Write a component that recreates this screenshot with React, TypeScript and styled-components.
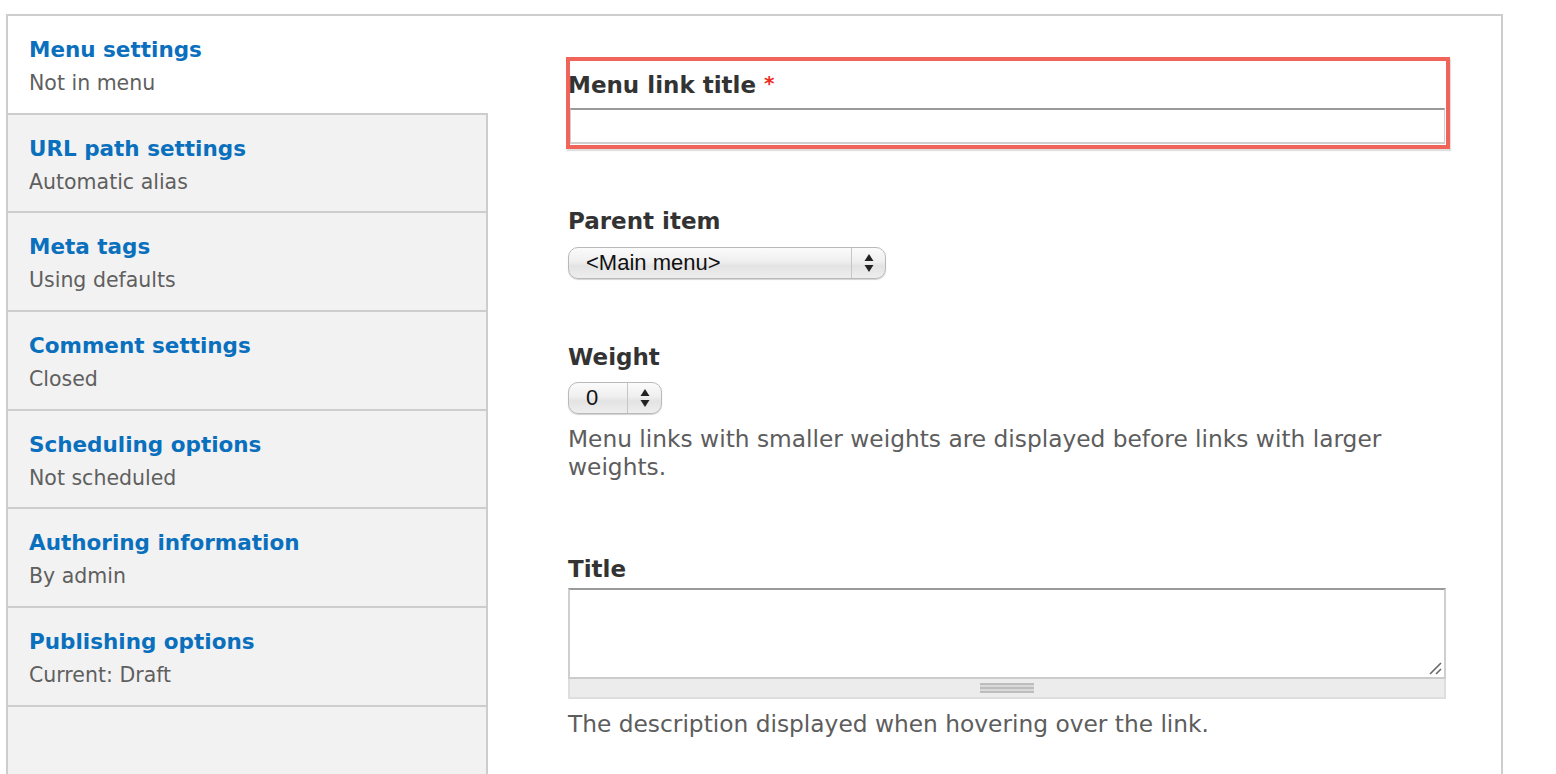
import React from 'react'
import styled, { createGlobalStyle } from 'styled-components'

const GlobalStyle = createGlobalStyle`
  body {
    margin: 0;
    background: #fff;
    overflow: hidden;
    font-family: "DejaVu Sans", Verdana, sans-serif;
  }
`

const Page = styled.div`
  padding: 14px 0 0 6px;
`

const Frame = styled.div`
  box-sizing: border-box;
  width: 1497px;
  min-height: 820px;
  border: 2px solid #cdcdcd;
  border-bottom: none;
  display: flex;
`

const Sidebar = styled.div`
  box-sizing: border-box;
  width: 480px;
  flex-shrink: 0;
  background: #f2f2f2;
  border-right: 2px solid #cdcdcd;
`

const Tab = styled.div<{ $active?: boolean }>`
  height: 98.7px;
  box-sizing: border-box;
  padding: 18px 21px 0;
  border-bottom: 2px solid #cdcdcd;
  background: ${(p) => (p.$active ? '#fff' : 'transparent')};
  margin-right: ${(p) => (p.$active ? '-2px' : '0')};
`

const TabTitle = styled.div`
  font-size: 21.5px;
  line-height: 31px;
  font-weight: bold;
  color: #0a70bd;
`

const TabSummary = styled.div`
  margin-top: 3px;
  font-size: 20.5px;
  line-height: 31px;
  color: #5f5f5f;
`

const FormColumn = styled.div`
  flex: 1;
  padding: 45px 55px 0 80px;
`

const FormItem = styled.div<{ $mt?: number }>`
  margin-top: ${(p) => p.$mt ?? 0}px;
`

const HighlightedItem = styled.div`
  margin-left: 2px;
  padding: 8px 0 1px;
  box-shadow: 0 0 0 4px #f1645a, 1px 2px 1px 4px rgba(0, 0, 0, 0.12);
`

const Label = styled.div<{ $shift?: number }>`
  margin-left: ${(p) => p.$shift ?? 0}px;
  font-size: 23px;
  line-height: 28px;
  font-weight: bold;
  color: #333;
`

const Required = styled.span`
  color: #ef2b1f;
  font-size: 20px;
  vertical-align: 3px;
`

const TextInput = styled.div`
  box-sizing: border-box;
  height: 36px;
  margin-top: 9px;
  margin-right: 1px;
  background: #fff;
  border: 1px solid #cfcfcf;
  border-top: 2px solid #9a9a9a;
  border-bottom: 2px solid #cfcfcf;
`

const Select = styled.div<{ $width: number; $mt: number }>`
  box-sizing: border-box;
  width: ${(p) => p.$width}px;
  height: 32px;
  margin-top: ${(p) => p.$mt}px;
  display: flex;
  border: 1px solid #b9b9b9;
  border-radius: 10px;
  background: linear-gradient(to bottom, #fbfbfb 0%, #efefef 45%, #e3e3e3 60%, #eeeeee 100%);
  box-shadow: 0 1px 1px rgba(0, 0, 0, 0.18);
  font-family: "Liberation Sans", Arial, sans-serif;
  font-size: 22px;
  color: #111;
`

const SelectValue = styled.div`
  flex: 1;
  padding-left: 17px;
  line-height: 30px;
`

const SelectArrows = styled.div`
  width: 33px;
  border-left: 1px solid #c6c6c6;
  display: flex;
  align-items: center;
  justify-content: center;
`

const Description = styled.div<{ $mt: number }>`
  margin-top: ${(p) => p.$mt}px;
  font-size: 23.3px;
  line-height: 28px;
  color: #5d5d5d;
`

const TextareaBox = styled.div`
  box-sizing: border-box;
  position: relative;
  height: 91px;
  margin-top: 5px;
  background: #fff;
  border: 2px solid #cfcfcf;
  border-top: 2px solid #9a9a9a;
  border-bottom: 2px solid #cbcbcb;
`

const ResizeHandle = styled.svg`
  position: absolute;
  right: 1px;
  bottom: 1px;
`

const Grippie = styled.div`
  box-sizing: border-box;
  height: 20px;
  background: #ececec;
  border: 2px solid #dedede;
  border-top: none;
  display: flex;
  align-items: center;
  justify-content: center;
`

const Grip = styled.div`
  width: 54px;
  height: 10px;
  background: repeating-linear-gradient(to bottom, #bdbdbd 0 2px, #d9d9d9 2px 4px);
`

const SelectArrowIcon = () => (
  <svg width="10" height="22" viewBox="0 0 10 22">
    <path d="M5 2 L9.5 9 L0.5 9 Z" fill="#222" />
    <path d="M5 20 L9.5 13 L0.5 13 Z" fill="#222" />
  </svg>
)

const tabs = [
  { title: 'Menu settings', summary: 'Not in menu' },
  { title: 'URL path settings', summary: 'Automatic alias' },
  { title: 'Meta tags', summary: 'Using defaults' },
  { title: 'Comment settings', summary: 'Closed' },
  { title: 'Scheduling options', summary: 'Not scheduled' },
  { title: 'Authoring information', summary: 'By admin' },
  { title: 'Publishing options', summary: 'Current: Draft' },
]

const App = () => {
  return (
    <Page>
      <GlobalStyle />
      <Frame>
        <Sidebar>
          {tabs.map((t, i) => (
            <Tab key={t.title} $active={i === 0}>
              <TabTitle>{t.title}</TabTitle>
              <TabSummary>{t.summary}</TabSummary>
            </Tab>
          ))}
        </Sidebar>
        <FormColumn>
          <HighlightedItem>
            <Label $shift={-2}>
              Menu link title <Required>*</Required>
            </Label>
            <TextInput />
          </HighlightedItem>

          <FormItem $mt={62}>
            <Label>Parent item</Label>
            <Select $width={318} $mt={12}>
              <SelectValue>&lt;Main menu&gt;</SelectValue>
              <SelectArrows>
                <SelectArrowIcon />
              </SelectArrows>
            </Select>
          </FormItem>

          <FormItem $mt={64}>
            <Label>Weight</Label>
            <Select $width={94} $mt={11}>
              <SelectValue>0</SelectValue>
              <SelectArrows>
                <SelectArrowIcon />
              </SelectArrows>
            </Select>
            <Description $mt={11}>
              Menu links with smaller weights are displayed before links with larger weights.
            </Description>
          </FormItem>

          <FormItem $mt={74}>
            <Label>Title</Label>
            <TextareaBox>
              <ResizeHandle width="16" height="16" viewBox="0 0 16 16">
                <path d="M3 14 L14 3" stroke="#666" strokeWidth="1.6" />
                <path d="M9 14 L14 9" stroke="#666" strokeWidth="1.6" />
              </ResizeHandle>
            </TextareaBox>
            <Grippie>
              <Grip />
            </Grippie>
            <Description $mt={11}>The description displayed when hovering over the link.</Description>
          </FormItem>
        </FormColumn>
      </Frame>
    </Page>
  )
}

export default App
